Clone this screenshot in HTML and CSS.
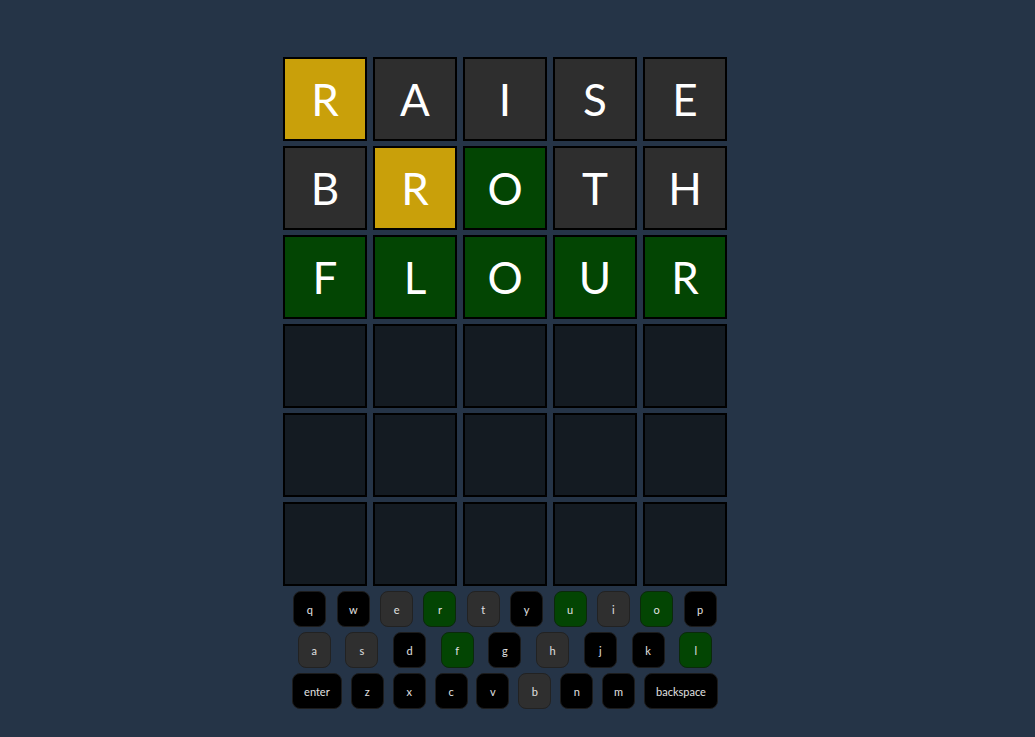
FILE: index.html
```html
<!DOCTYPE html>
<html lang="en">
<head>
<meta charset="utf-8">
<title>Wordle</title>
<link rel="stylesheet" href="styles.css">
</head>
<body>
<div class="app">
  <main class="game">
    <div class="board">
      <div class="row">
        <div class="tile present">R</div><div class="tile absent">A</div><div class="tile absent">I</div><div class="tile absent">S</div><div class="tile absent">E</div>
      </div>
      <div class="row">
        <div class="tile absent">B</div><div class="tile present">R</div><div class="tile correct">O</div><div class="tile absent">T</div><div class="tile absent">H</div>
      </div>
      <div class="row">
        <div class="tile correct">F</div><div class="tile correct">L</div><div class="tile correct">O</div><div class="tile correct">U</div><div class="tile correct">R</div>
      </div>
      <div class="row">
        <div class="tile"></div><div class="tile"></div><div class="tile"></div><div class="tile"></div><div class="tile"></div>
      </div>
      <div class="row">
        <div class="tile"></div><div class="tile"></div><div class="tile"></div><div class="tile"></div><div class="tile"></div>
      </div>
      <div class="row">
        <div class="tile"></div><div class="tile"></div><div class="tile"></div><div class="tile"></div><div class="tile"></div>
      </div>
    </div>
    <div class="keyboard">
      <div class="krow">
        <button class="key">q</button><button class="key">w</button><button class="key k-absent">e</button><button class="key k-correct">r</button><button class="key k-absent">t</button><button class="key">y</button><button class="key k-correct">u</button><button class="key k-absent">i</button><button class="key k-correct">o</button><button class="key">p</button>
      </div>
      <div class="krow">
        <button class="key k-absent">a</button><button class="key k-absent">s</button><button class="key">d</button><button class="key k-correct">f</button><button class="key">g</button><button class="key k-absent">h</button><button class="key">j</button><button class="key">k</button><button class="key k-correct">l</button>
      </div>
      <div class="krow">
        <button class="key wide-enter">enter</button><button class="key">z</button><button class="key">x</button><button class="key">c</button><button class="key">v</button><button class="key k-absent">b</button><button class="key">n</button><button class="key">m</button><button class="key wide-back">backspace</button>
      </div>
    </div>
  </main>
</div>
</body>
</html>
```

FILE: styles.css
```css
html, body {
  margin: 0;
  padding: 0;
  background: #253447;
  height: 100%;
}

body {
  font-family: "Lato", "Open Sans", sans-serif;
  color: #fff;
}

.app {
  display: flex;
  justify-content: center;
  padding-right: 25px;
  padding-top: 57px;
}

.game {
  width: 444px;
  display: flex;
  flex-direction: column;
  gap: 5px;
}

.board {
  display: flex;
  flex-direction: column;
  gap: 5px;
}

.row {
  display: flex;
  gap: 6px;
}

.tile {
  box-sizing: border-box;
  width: 84px;
  height: 84px;
  border: 2px solid #000;
  background: #141b22;
  display: flex;
  align-items: center;
  justify-content: center;
  font-size: 44px;
  font-weight: 400;
  color: #fff;
  line-height: 1;
}

.tile.absent { background: #2e2e2e; }
.tile.present { background: #c9a00a; }
.tile.correct { background: #034503; }

.keyboard {
  display: flex;
  flex-direction: column;
  gap: 5px;
}

.krow {
  display: flex;
  justify-content: space-evenly;
}

.key {
  box-sizing: border-box;
  width: 33px;
  height: 36px;
  border: 1px solid #1c1c1c;
  border-radius: 8px;
  background: #000;
  color: #e0e0e0;
  font-family: "Lato", "Open Sans", sans-serif;
  font-size: 11px;
  font-weight: 400;
  padding: 0;
  display: flex;
  align-items: center;
  justify-content: center;
}

.key.k-absent { background: #2f2f2f; border-color: #222; }
.key.k-correct { background: #034503; border-color: #0a2a0a; }

.key.wide-enter { width: 50px; }
.key.wide-back { width: 74px; }
```
